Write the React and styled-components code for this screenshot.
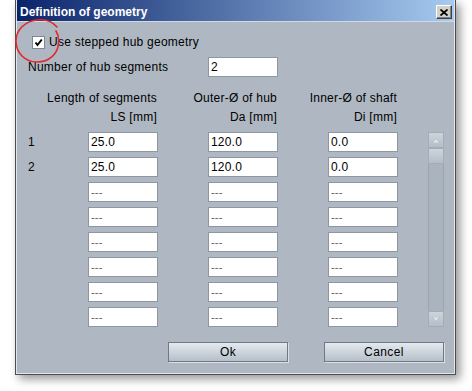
import React from 'react';
import styled, { createGlobalStyle } from 'styled-components';

const COLS = '60px 70px 50px 70px 50px 70px 30px 16px';

const Global = createGlobalStyle`
  html, body { margin: 0; padding: 0; background: #ffffff; }
  body { font-family: "Liberation Sans", Arial, sans-serif; font-size: 12px; color: #000; }
`;

const Page = styled.div`
  position: relative;
  width: 472px;
  height: 391px;
  overflow: hidden;
`;

const Window = styled.div`
  margin-left: 15px;
  width: 441px;
  box-sizing: border-box;
  border: 1px solid #4c4c4c;
  border-top: none;
  box-shadow: 4px 4px 9px rgba(0, 0, 0, 0.42);
`;

const Frame = styled.div`
  border: 1px solid #e2e6ea;
  border-top: none;
  background: #afb8c2;
`;

const TitleBar = styled.div`
  display: flex;
  align-items: flex-start;
  height: 21px;
  padding: 0 2px 0 3px;
  background: linear-gradient(to right, #0a246a 0%, #a6caf0 100%);
  border-bottom: 1px solid #d3d9df;
`;

const Title = styled.div`
  padding-top: 3px;
  line-height: 19px;
  font-size: 12px;
  font-weight: bold;
  color: #ffffff;
`;

const CloseButton = styled.div`
  margin-left: auto;
  margin-top: 5px;
  width: 16px;
  height: 14px;
  box-sizing: border-box;
  background: #d4d0c8;
  border-top: 1px solid #ffffff;
  border-left: 1px solid #ffffff;
  border-right: 1px solid #404040;
  border-bottom: 1px solid #404040;
  box-shadow: inset -1px -1px 0 #808080;
  display: flex;
  align-items: center;
  justify-content: center;
`;

const Content = styled.div`
  padding: 14px 0 11px 11px;
  letter-spacing: 0.25px;
`;

const CheckRow = styled.label`
  display: flex;
  align-items: center;
  height: 13px;
  line-height: 13px;
  padding-left: 4px;
  gap: 4px;
`;

const CheckBox = styled.span`
  width: 13px;
  height: 13px;
  box-sizing: border-box;
  background: #ffffff;
  border: 1px solid #7d8893;
  display: flex;
  align-items: center;
  justify-content: center;
`;

const Grid = styled.div`
  display: grid;
  grid-template-columns: ${COLS};
  margin-top: ${(p) => p.$top}px;
  row-gap: ${(p) => p.$gap || 0}px;
  grid-auto-rows: ${(p) => p.$row}px;
`;

const Label = styled.div`
  grid-column: ${(p) => p.$col || 'auto'};
  line-height: ${(p) => p.$lh || 20}px;
  white-space: nowrap;
  text-align: ${(p) => (p.$right ? 'right' : 'left')};
  padding-right: ${(p) => (p.$right ? 1 : 0)}px;
`;

const Field = styled.div`
  grid-column: ${(p) => p.$col};
  height: 20px;
  box-sizing: border-box;
  background: #ffffff;
  border: 1px solid #8d97a1;
  padding-left: 2px;
  line-height: 18px;
  letter-spacing: 0.2px;
  color: ${(p) => (p.$empty ? '#5c5c5c' : '#000000')};
  font-size: ${(p) => (p.$empty ? 11 : 12)}px;
  white-space: nowrap;
  overflow: hidden;
`;

const Scroll = styled.div`
  grid-column: 8;
  grid-row: 1 / span 8;
  display: flex;
  flex-direction: column;
  box-sizing: border-box;
  border-left: 1px solid #9ca6b0;
  border-right: 1px solid #9ca6b0;
  background: #aab4be;
`;

const ScrollPart = styled.div`
  height: 16px;
  box-sizing: border-box;
  margin: 0 -1px;
  background: linear-gradient(to bottom, #cdd4db, #b4bec8);
  border: 1px solid #a3adb7;
  display: flex;
  align-items: center;
  justify-content: center;
  margin-top: ${(p) => (p.$bottom ? 'auto' : '0')};
`;

const ButtonRow = styled.div`
  display: flex;
  justify-content: flex-end;
  gap: 36px;
  width: 416px;
  margin-top: 15px;
`;

const Button = styled.div`
  width: 120px;
  height: 20px;
  box-sizing: border-box;
  border: 1px solid #6f7984;
  box-shadow: 1px 1px 0 #dbe0e5;
  background: linear-gradient(to bottom, #e4e9ee, #b6c0ca);
  display: flex;
  align-items: center;
  justify-content: center;
  line-height: 18px;
  letter-spacing: 0.4px;
`;

const Annotation = styled.svg`
  position: absolute;
  left: 13px;
  top: 18px;
  pointer-events: none;
`;

const rows = [
  { n: '1', v: ['25.0', '120.0', '0.0'] },
  { n: '2', v: ['25.0', '120.0', '0.0'] },
  ...Array.from({ length: 6 }, () => ({ n: '', v: ['---', '---', '---'] })),
];

const Arrow = ({ down }) => (
  <svg width="8" height="5" viewBox="0 0 8 5">
    <path d={down ? 'M0 0 L8 0 L4 4.5 Z' : 'M0 5 L8 5 L4 0.5 Z'} fill="#dfe4e9" stroke="#a7b1bb" strokeWidth="0.6" />
  </svg>
);

export default function App() {
  return (
    <Page>
      <Global />
      <Window>
        <Frame>
          <TitleBar>
            <Title>Definition of geometry</Title>
            <CloseButton>
              <svg width="8" height="7" viewBox="0 0 8 7">
                <path d="M0.5 0.5 L7.5 6.5 M7.5 0.5 L0.5 6.5" stroke="#000" strokeWidth="1.7" />
              </svg>
            </CloseButton>
          </TitleBar>
          <Content>
            <CheckRow>
              <CheckBox>
                <svg width="9" height="9" viewBox="0 0 9 9">
                  <path d="M1.5 4.5 L3.5 7 L7.8 1.5" fill="none" stroke="#000" strokeWidth="2" />
                </svg>
              </CheckBox>
              <span>Use stepped hub geometry</span>
            </CheckRow>
            <Grid $top={8} $row={20}>
              <Label $col="1 / 4">Number of hub segments</Label>
              <Field $col={4}>2</Field>
            </Grid>
            <Grid $top={12} $row={19}>
              <Label $col="1 / 3" $lh={19} $right>Length of segments</Label>
              <Label $col="3 / 5" $lh={19} $right>Outer-Ø of hub</Label>
              <Label $col="5 / 7" $lh={19} $right>Inner-Ø of shaft</Label>
              <Label $col="1 / 3" $lh={19} $right>LS [mm]</Label>
              <Label $col="3 / 5" $lh={19} $right>Da [mm]</Label>
              <Label $col="5 / 7" $lh={19} $right>Di [mm]</Label>
            </Grid>
            <Grid $top={5} $row={20} $gap={5}>
              {rows.map((r, i) => (
                <React.Fragment key={i}>
                  <Label $col={1} style={{ gridRow: i + 1 }}>{r.n}</Label>
                  {r.v.map((val, j) => (
                    <Field key={j} $col={2 + j * 2} $empty={val === '---'} style={{ gridRow: i + 1 }}>
                      {val}
                    </Field>
                  ))}
                </React.Fragment>
              ))}
              <Scroll>
                <ScrollPart><Arrow /></ScrollPart>
                <ScrollPart />
                <ScrollPart $bottom><Arrow down /></ScrollPart>
              </Scroll>
            </Grid>
            <ButtonRow>
              <Button>Ok</Button>
              <Button>Cancel</Button>
            </ButtonRow>
          </Content>
        </Frame>
      </Window>
      <Annotation width="50" height="48" viewBox="0 0 50 48">
        <path
          d="M44 9 C39 3 31 1 24 2 C12 3 3 12 3 23 C3 35 12 44 24 44 C36 44 45 36 45.5 25 C46 20 45 16 43 13"
          fill="none"
          stroke="#e3282b"
          strokeWidth="1.6"
          strokeLinecap="round"
        />
      </Annotation>
    </Page>
  );
}
